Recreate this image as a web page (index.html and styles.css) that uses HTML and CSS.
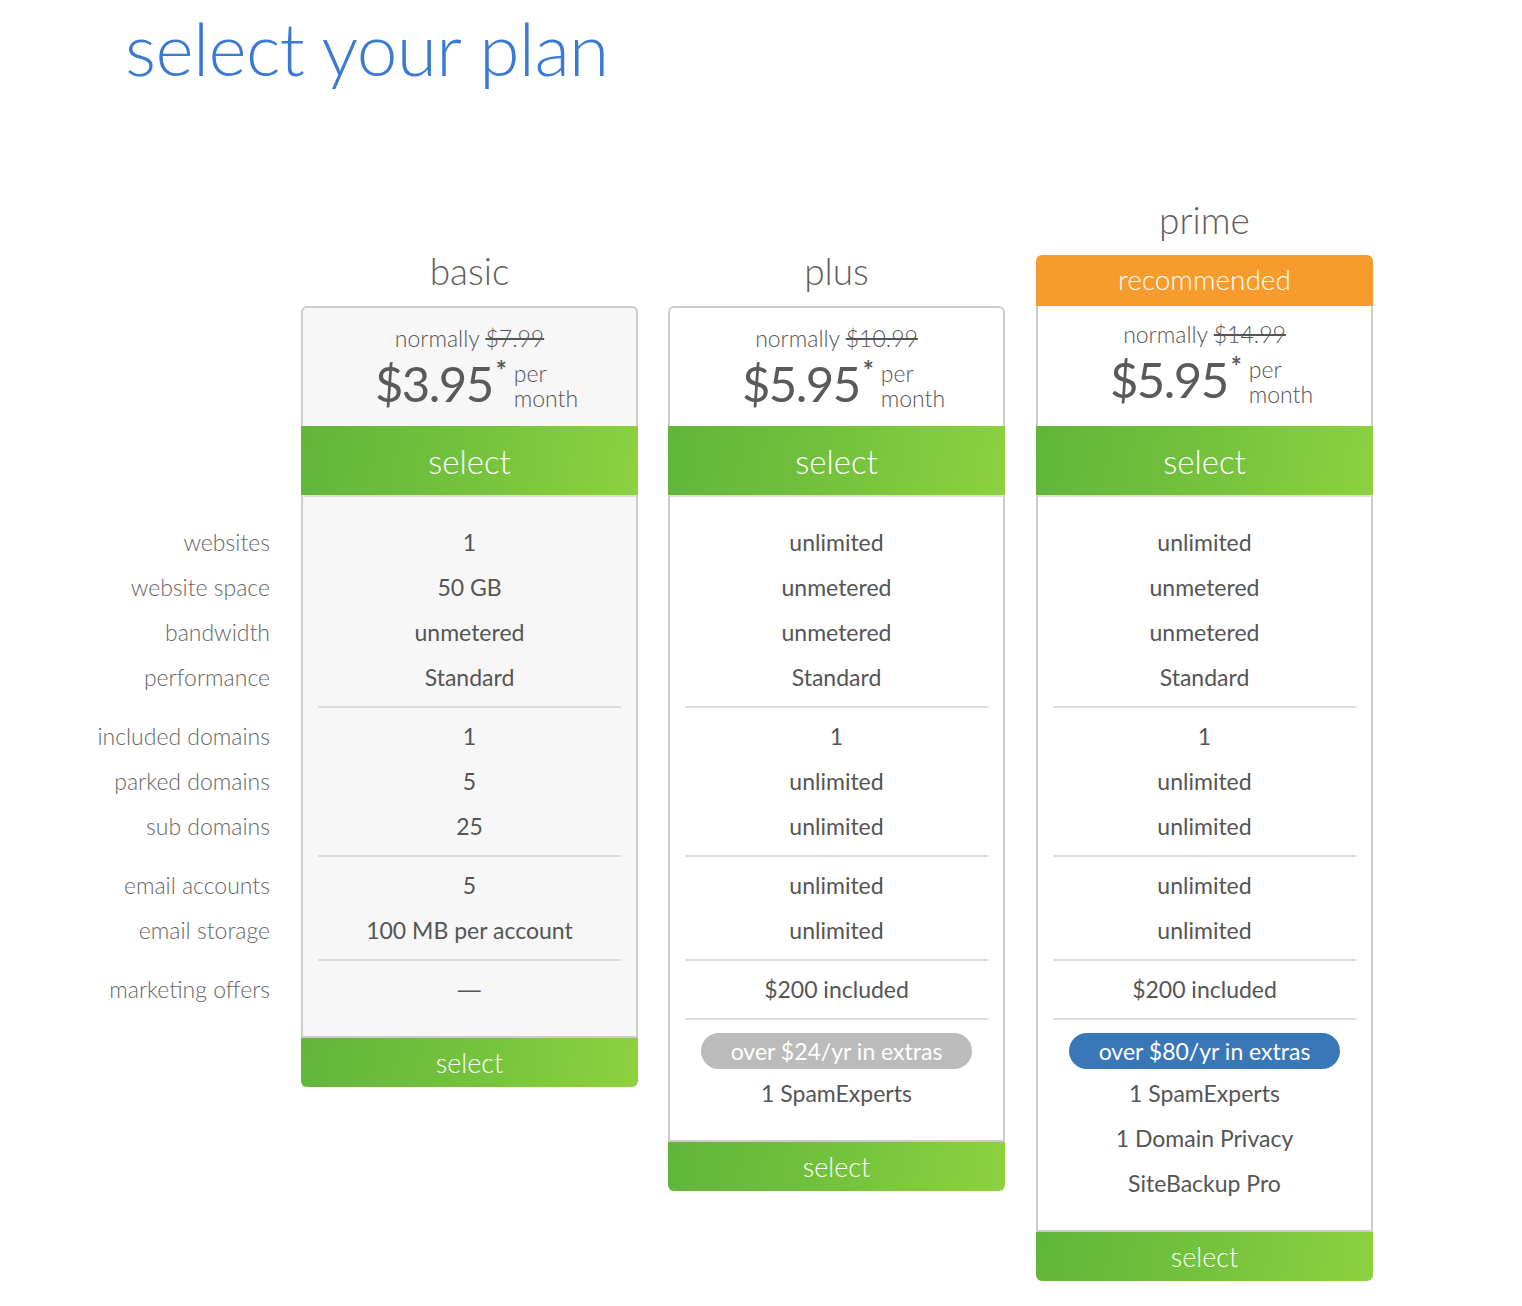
FILE: index.html
```html
<!DOCTYPE html>
<html lang="en">
<head>
<meta charset="utf-8">
<title>select your plan</title>
<link rel="stylesheet" href="styles.css">
</head>
<body>
<div class="page">
  <h1 class="title">select your plan</h1>
  <div class="plans">
    <div class="labels">
      <div class="labels-spacer"></div>
      <div class="list">
        <div class="row">websites</div>
        <div class="row">website space</div>
        <div class="row">bandwidth</div>
        <div class="row">performance</div>
        <div class="sep sep-hidden"></div>
        <div class="row">included domains</div>
        <div class="row">parked domains</div>
        <div class="row">sub domains</div>
        <div class="sep sep-hidden"></div>
        <div class="row">email accounts</div>
        <div class="row">email storage</div>
        <div class="sep sep-hidden"></div>
        <div class="row">marketing offers</div>
      </div>
    </div>

    <div class="plan plan-gray">
      <div class="plan-head"><h2 class="plan-name">basic</h2></div>
      <div class="price-box">
        <div class="normally">normally <s>$7.99</s></div>
        <div class="price"><span class="amount">$3.95</span><span class="star">*</span><span class="per">per<br>month</span></div>
      </div>
      <a class="select select-top" href="#">select</a>
      <div class="features">
        <div class="list">
          <div class="row">1</div>
          <div class="row">50 GB</div>
          <div class="row">unmetered</div>
          <div class="row">Standard</div>
          <div class="sep"></div>
          <div class="row">1</div>
          <div class="row">5</div>
          <div class="row">25</div>
          <div class="sep"></div>
          <div class="row">5</div>
          <div class="row">100 MB per account</div>
          <div class="sep"></div>
          <div class="row"><span class="dash">—</span></div>
        </div>
      </div>
      <a class="select select-bottom" href="#">select</a>
    </div>

    <div class="plan">
      <div class="plan-head"><h2 class="plan-name">plus</h2></div>
      <div class="price-box">
        <div class="normally">normally <s>$10.99</s></div>
        <div class="price"><span class="amount">$5.95</span><span class="star">*</span><span class="per">per<br>month</span></div>
      </div>
      <a class="select select-top" href="#">select</a>
      <div class="features">
        <div class="list">
          <div class="row">unlimited</div>
          <div class="row">unmetered</div>
          <div class="row">unmetered</div>
          <div class="row">Standard</div>
          <div class="sep"></div>
          <div class="row">1</div>
          <div class="row">unlimited</div>
          <div class="row">unlimited</div>
          <div class="sep"></div>
          <div class="row">unlimited</div>
          <div class="row">unlimited</div>
          <div class="sep"></div>
          <div class="row">$200 included</div>
          <div class="sep"></div>
          <div class="row"><span class="pill pill-gray">over $24/yr in extras</span></div>
          <div class="row">1 SpamExperts</div>
        </div>
      </div>
      <a class="select select-bottom" href="#">select</a>
    </div>

    <div class="plan plan-featured">
      <div class="plan-head">
        <h2 class="plan-name">prime</h2>
        <div class="recommended">recommended</div>
      </div>
      <div class="price-box">
        <div class="normally">normally <s>$14.99</s></div>
        <div class="price"><span class="amount">$5.95</span><span class="star">*</span><span class="per">per<br>month</span></div>
      </div>
      <a class="select select-top" href="#">select</a>
      <div class="features">
        <div class="list">
          <div class="row">unlimited</div>
          <div class="row">unmetered</div>
          <div class="row">unmetered</div>
          <div class="row">Standard</div>
          <div class="sep"></div>
          <div class="row">1</div>
          <div class="row">unlimited</div>
          <div class="row">unlimited</div>
          <div class="sep"></div>
          <div class="row">unlimited</div>
          <div class="row">unlimited</div>
          <div class="sep"></div>
          <div class="row">$200 included</div>
          <div class="sep"></div>
          <div class="row"><span class="pill pill-blue">over $80/yr in extras</span></div>
          <div class="row">1 SpamExperts</div>
          <div class="row">1 Domain Privacy</div>
          <div class="row">SiteBackup Pro</div>
        </div>
      </div>
      <a class="select select-bottom" href="#">select</a>
    </div>
  </div>
</div>
</body>
</html>
```

FILE: styles.css
```css
* { box-sizing: border-box; }

body {
  margin: 0;
  background: #ffffff;
  font-family: "Lato", "Open Sans", "Liberation Sans", sans-serif;
  color: #5b5b5b;
}

.page {
  width: 1522px;
}

.title {
  margin: 11px 0 0 125px;
  font-size: 73px;
  line-height: 74px;
  font-weight: 300;
  color: #3b7ad2;
  letter-spacing: -0.6px;
}

.plans {
  display: flex;
  align-items: flex-start;
  gap: 30px;
  margin-top: 105px;
  padding-left: 70px;
}

.labels {
  width: 200px;
  margin-right: 1px;
  text-align: right;
  color: #666666;
  font-weight: 300;
}

.labels-spacer {
  height: 307px;
}

.labels .list {
  padding-top: 23px;
}

.plan {
  width: 337px;
  display: flex;
  flex-direction: column;
}

.plan-featured {
  margin-left: 1px;
}

.plan-head {
  height: 116px;
  display: flex;
  flex-direction: column;
  justify-content: flex-end;
  text-align: center;
}

.plan-name {
  margin: 0 0 13px;
  font-size: 37px;
  line-height: 44px;
  font-weight: 300;
  color: #5f5f5f;
}

.recommended {
  height: 51px;
  line-height: 49px;
  background: #f79c2c;
  color: #ffffff;
  font-size: 28px;
  font-weight: 300;
  border-radius: 6px 6px 0 0;
}

.price-box {
  height: 120px;
  border: 2px solid #cccccc;
  border-bottom: 0;
  border-radius: 6px 6px 0 0;
  background: #ffffff;
  padding-top: 17px;
  text-align: center;
}

.plan-gray .price-box,
.plan-gray .features {
  background: #f7f7f7;
}

.plan-featured .price-box {
  border-top: 0;
  border-radius: 0;
  padding-top: 15px;
}

.normally {
  font-size: 23px;
  line-height: 26px;
  font-weight: 300;
  color: #555555;
}

.normally s {
  text-decoration-thickness: 2px;
}

.price {
  display: flex;
  justify-content: center;
  align-items: flex-start;
  margin-top: 8px;
  padding-left: 14px;
}

.amount {
  font-size: 49px;
  line-height: 48px;
  font-weight: 400;
  color: #5a5a5a;
  letter-spacing: -1.5px;
}

.star {
  font-size: 26px;
  line-height: 22px;
  font-weight: 700;
  color: #5a5a5a;
  margin-left: 3px;
}

.per {
  margin-left: 7px;
  margin-top: 2px;
  font-size: 23px;
  line-height: 25px;
  font-weight: 300;
  text-align: left;
  color: #555555;
}

.select {
  display: block;
  text-align: center;
  text-decoration: none;
  color: #ffffff;
  font-weight: 300;
  background: linear-gradient(100deg, #61b53a 0%, #76c43d 55%, #8dd23f 100%);
}

.select-top {
  height: 69px;
  line-height: 70px;
  font-size: 33px;
}

.select-bottom {
  height: 49px;
  line-height: 50px;
  font-size: 27px;
  border-radius: 0 0 6px 6px;
}

.features {
  border: 2px solid #cccccc;
  border-top-color: #dddddd;
  background: #ffffff;
  padding: 23px 0 24px;
  text-align: center;
}

.row {
  height: 45px;
  line-height: 45px;
  font-size: 23px;
  white-space: nowrap;
}

.features .row {
  color: #555555;
}

.dash {
  display: inline-block;
  transform: scaleX(1.5);
}

.sep {
  height: 2px;
  margin: 6px 15px;
  background: #dddddd;
}

.sep-hidden {
  background: transparent;
}

.pill {
  display: inline-block;
  height: 36px;
  line-height: 36px;
  padding: 0 30px;
  border-radius: 18px;
  color: #ffffff;
  font-size: 23px;
  vertical-align: middle;
}

.pill-gray {
  background: #bbbbbb;
}

.pill-blue {
  background: #3a77b9;
}
```
